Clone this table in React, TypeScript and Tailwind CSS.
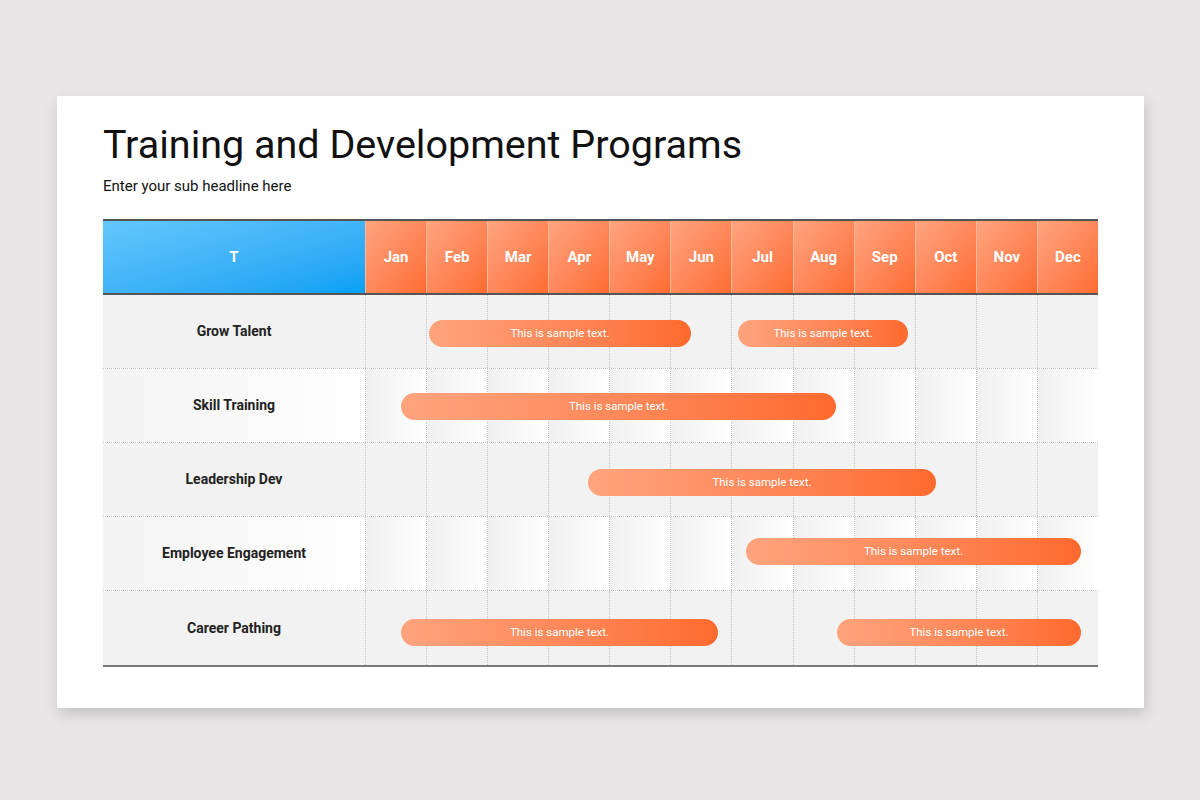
const months = ["Jan", "Feb", "Mar", "Apr", "May", "Jun", "Jul", "Aug", "Sep", "Oct", "Nov", "Dec"];

type Bar = { left: number; width: number; top: number };

const rows: { label: string; shaded: boolean; bars: Bar[] }[] = [
  { label: "Grow Talent", shaded: true, bars: [{ left: 64, width: 262, top: 25 }, { left: 373, width: 170, top: 25 }] },
  { label: "Skill Training", shaded: false, bars: [{ left: 36, width: 435, top: 24 }] },
  { label: "Leadership Dev", shaded: true, bars: [{ left: 223, width: 348, top: 26 }] },
  { label: "Employee Engagement", shaded: false, bars: [{ left: 381, width: 335, top: 21 }] },
  { label: "Career Pathing", shaded: true, bars: [{ left: 36, width: 317, top: 28 }, { left: 472, width: 244, top: 28 }] },
];

export default function App() {
  return (
    <div className="min-h-[800px] w-[1200px] bg-[#e8e6e7] pt-[96px] pl-[57px] font-['Roboto','Liberation_Sans',sans-serif]">
      <div className="h-[612px] w-[1087px] bg-white pt-[25px] pl-[46px] shadow-[2px_6px_14px_rgba(0,0,0,0.16)]">
        <h1 className="text-[39.5px] leading-[48px] text-[#111]">Training and Development Programs</h1>
        <p className="mt-[7px] text-[15px] leading-[20px] text-[#111]">Enter your sub headline here</p>

        <div className="mt-[23px] w-[995px]">
          {/* header */}
          <div className="grid h-[76px] grid-cols-[262px_repeat(12,1fr)] border-y-2 border-[#555]">
            <div className="flex items-center justify-center bg-gradient-to-br from-[#63c7fc] to-[#00a0f4] text-[15px] font-bold text-white">
              T
            </div>
            {months.map((m) => (
              <div
                key={m}
                className="flex items-center justify-center border-l border-[#ffb79a] bg-gradient-to-br from-[#ffa47f] to-[#ff6b30] text-[15px] font-bold text-white"
              >
                {m}
              </div>
            ))}
          </div>

          {/* body */}
          {rows.map((row, i) => (
            <div
              key={row.label}
              className={`relative grid grid-cols-[262px_repeat(12,1fr)] ${
                i === rows.length - 1
                  ? "h-[76px] border-b-2 border-solid border-[#7a7a7a]"
                  : "h-[74px] border-b border-dotted border-[#c4c4c4]"
              }`}
            >
              <div
                className={`flex items-center justify-center text-[14px] font-bold text-[#222] ${
                  row.shaded ? "bg-[#f2f2f2]" : "bg-gradient-to-r from-[#f3f3f3] to-white"
                }`}
              >
                {row.label}
              </div>
              {months.map((m) => (
                <div
                  key={m}
                  className={`border-l border-dotted border-[#c4c4c4] ${
                    row.shaded ? "bg-[#f2f2f2]" : "bg-gradient-to-r from-[#f0f0f0] to-white"
                  }`}
                />
              ))}
              {row.bars.map((b, j) => (
                <div
                  key={j}
                  className="absolute flex h-[27px] items-center justify-center rounded-full bg-gradient-to-r from-[#ffa47e] to-[#ff6a2d] text-[11.5px] text-white"
                  style={{ left: 262 + b.left, width: b.width, top: b.top }}
                >
                  This is sample text.
                </div>
              ))}
            </div>
          ))}
        </div>
      </div>
    </div>
  );
}
